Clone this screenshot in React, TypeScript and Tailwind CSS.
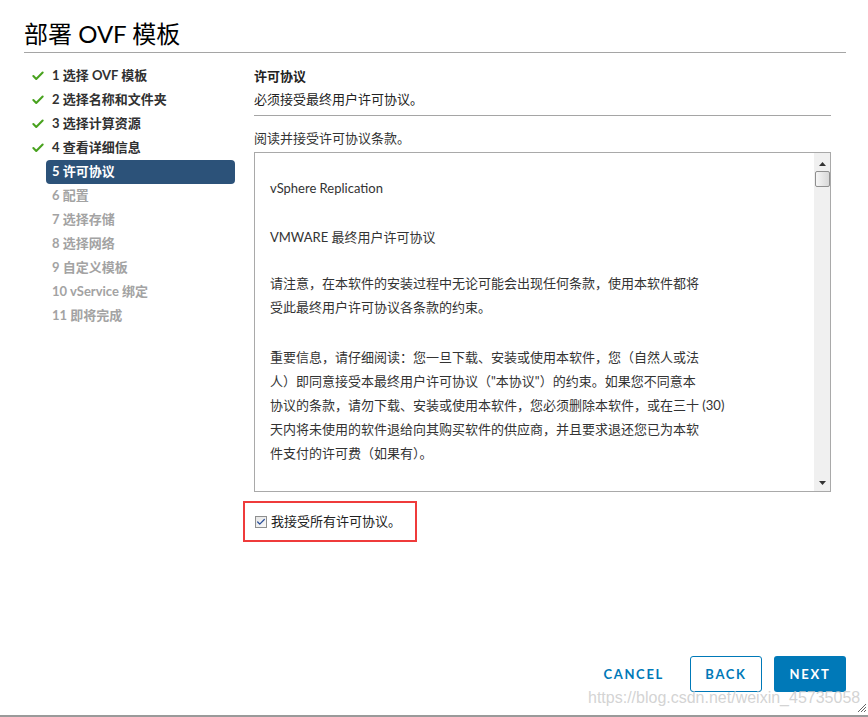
import { Check } from "lucide-react";

const steps = [
  { n: 1, label: "选择 OVF 模板", done: true },
  { n: 2, label: "选择名称和文件夹", done: true },
  { n: 3, label: "选择计算资源", done: true },
  { n: 4, label: "查看详细信息", done: true },
  { n: 5, label: "许可协议", active: true },
  { n: 6, label: "配置" },
  { n: 7, label: "选择存储" },
  { n: 8, label: "选择网络" },
  { n: 9, label: "自定义模板" },
  { n: 10, label: "vService 绑定" },
  { n: 11, label: "即将完成" },
];

const font = "font-['Lato','Noto_Sans_CJK_SC',sans-serif]";

export default function App() {
  return (
    <div className={`relative w-[868px] h-[717px] bg-white border-b-2 border-[#9a9a9a] ${font} text-[#333]`}>
      <div className="px-6 pt-[17px]">
        <h1 className="text-[24px] leading-[34px] font-normal text-[#000] pb-[1px] border-b border-[#a5a5a5] w-[822px]">部署 OVF 模板</h1>
      </div>

      <div className="flex pt-[11px]">
        {/* wizard steps */}
        <nav className="w-[254px] shrink-0 pl-[46px] pr-[19px]">
          {steps.map((s) => (
            <div
              key={s.n}
              className={`relative h-6 flex items-center pl-[6px] text-[13px] font-bold rounded-[4px] ${
                s.active ? "bg-[#2c5279] text-white" : s.done ? "text-[#313131]" : "text-[#a3a3a3]"
              }`}
            >
              {s.done && <Check size={14} strokeWidth={3.5} className="absolute -left-[15px] text-[#48a21e]" />}
              {s.n} {s.label}
            </div>
          ))}
        </nav>

        {/* content */}
        <div className="w-[577px]">
          <div className="text-[13px] font-bold text-[#222] leading-6">许可协议</div>
          <div className="text-[13px] text-[#222] leading-[22px] pb-[5px] border-b border-[#a5a5a5]">必须接受最终用户许可协议。</div>
          <div className="text-[13px] text-[#333] mt-[12px] leading-[20px]">阅读并接受许可协议条款。</div>

          <div className="mt-[4px] h-[340px] border border-[#a9a9a9] flex">
            <div className="flex-1 pl-[15px] pt-[23px] text-[13px] leading-6 text-[#333] whitespace-nowrap">
              <p>vSphere Replication</p>
              <p className="mt-[25px]">VMWARE 最终用户许可协议</p>
              <p className="mt-[22px]">
                请注意，在本软件的安装过程中无论可能会出现任何条款，使用本软件都将<br />
                受此最终用户许可协议各条款的约束。
              </p>
              <p className="mt-[26px]">
                重要信息，请仔细阅读：您一旦下载、安装或使用本软件，您（自然人或法<br />
                人）即同意接受本最终用户许可协议（"本协议"）的约束。如果您不同意本<br />
                协议的条款，请勿下载、安装或使用本软件，您必须删除本软件，或在三十 (30)<br />
                天内将未使用的软件退给向其购买软件的供应商，并且要求退还您已为本软<br />
                件支付的许可费（如果有）。
              </p>
            </div>
            <div className="w-[16px] bg-[#f0f0f0] flex flex-col items-center">
              <svg width="7" height="4" viewBox="0 0 7 4" className="mt-[9px]"><path d="M3.5 0L7 4H0z" fill="#333" /></svg>
              <div className="mt-[5px] w-[15px] h-[16px] rounded-[2px] border border-[#8f8f8f] bg-gradient-to-r from-[#f6f6f6] to-[#d8d8d8]" />
              <div className="flex-1" />
              <svg width="7" height="4" viewBox="0 0 7 4" className="mb-[6px]"><path d="M0 0H7L3.5 4z" fill="#333" /></svg>
            </div>
          </div>

          <div className="-ml-[11px] mt-[9px] w-[174px] h-[41px] border-2 border-[#ef3b3b] flex items-center pl-[10px]">
            <span className="w-[12px] h-[12px] border border-[#8e8f8f] bg-gradient-to-br from-[#e6e6e6] to-[#f8f8f8] flex items-center justify-center">
              <Check size={10} strokeWidth={3} className="text-[#2a4f9a]" />
            </span>
            <span className="ml-[4px] text-[13px] text-[#222]">我接受所有许可协议。</span>
          </div>
        </div>
      </div>

      {/* footer */}
      <div className="absolute right-[22px] top-[656px] flex items-center gap-3 text-[13px] font-bold tracking-[0.13em]">
        <button className="h-9 pt-[2px] px-[14px] text-[#0079b8]">CANCEL</button>
        <button className="h-9 pt-[2px] w-[72px] border border-[#0079b8] rounded-[3px] text-[#0079b8]">BACK</button>
        <button className="h-9 pt-[2px] w-[72px] bg-[#0079b8] rounded-[3px] text-white">NEXT</button>
      </div>

      <div className="absolute left-[588px] top-[686px] text-[16px] text-[#c8c8c8]/80 font-['Liberation_Sans',sans-serif] pointer-events-none">
        https://blog.csdn.net/weixin_45735058
      </div>

      <svg width="8" height="8" viewBox="0 0 8 8" className="absolute right-[2px] bottom-[3px]">
        <path d="M8 0L0 8M8 3L3 8M8 6L6 8" stroke="#666" strokeWidth="1" />
      </svg>
    </div>
  );
}
